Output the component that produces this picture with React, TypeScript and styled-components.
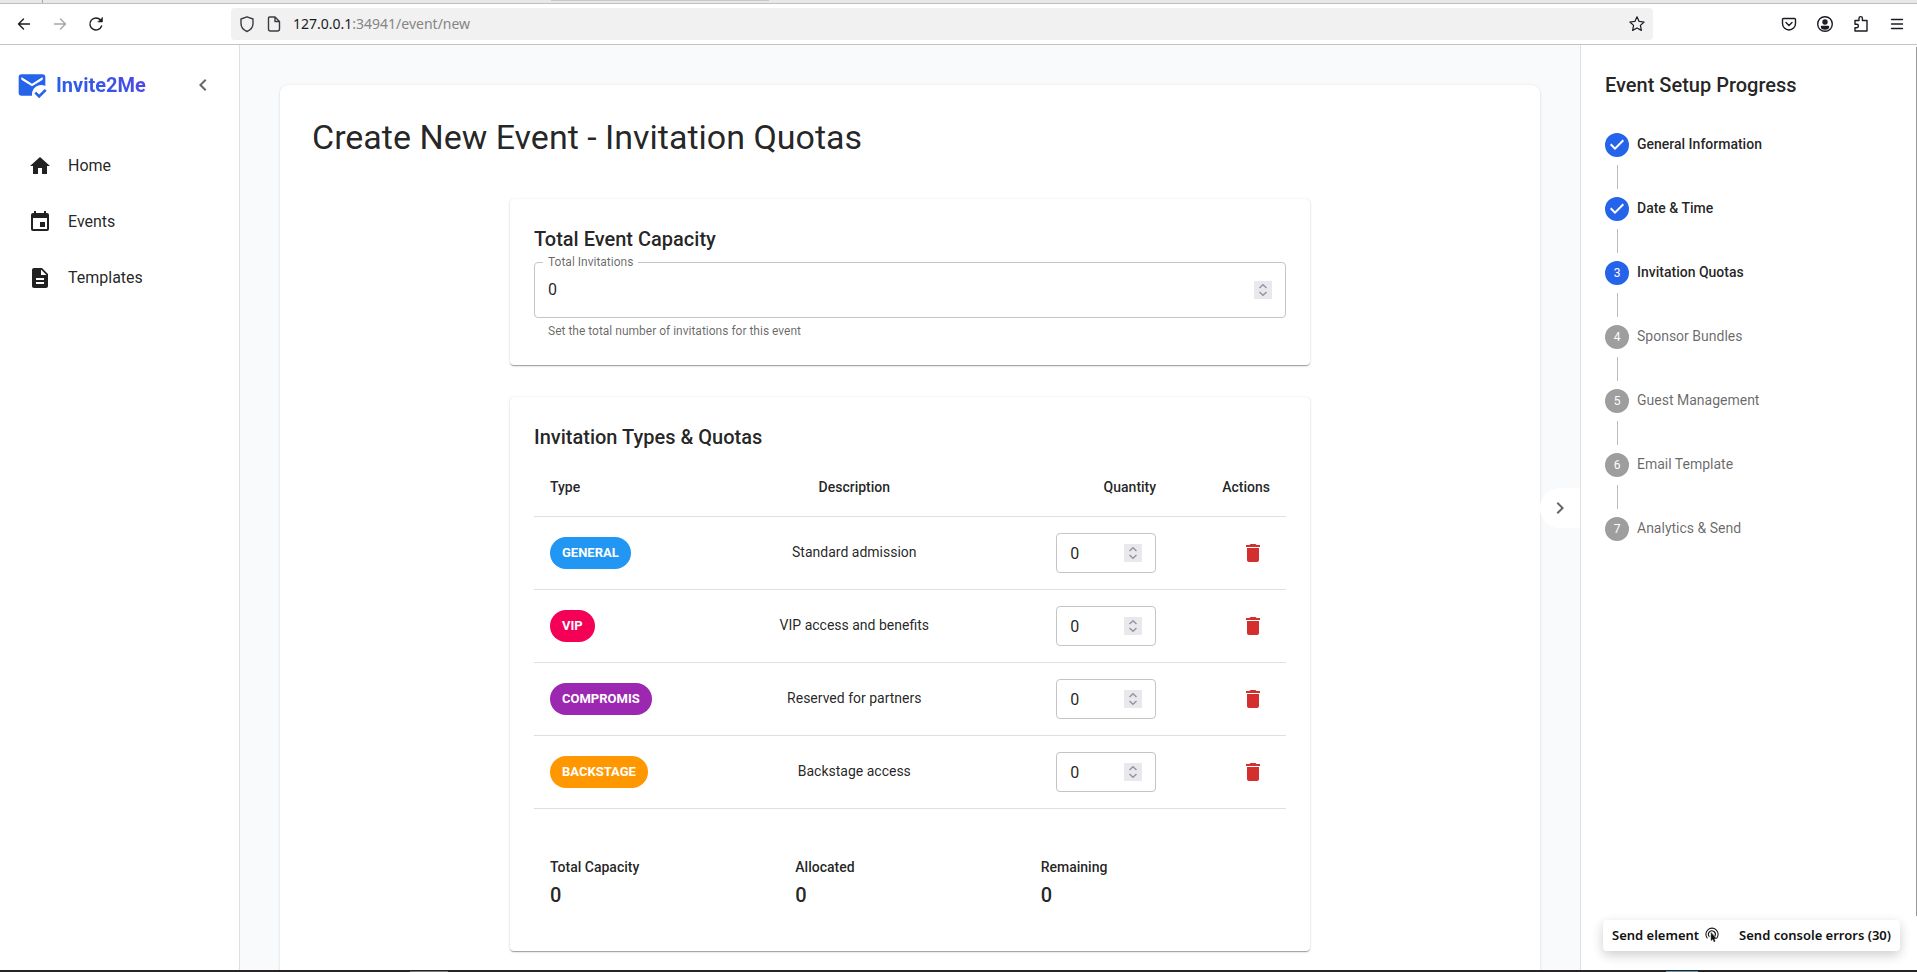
import React, { useState } from 'react';
import styled, { createGlobalStyle, css } from 'styled-components';

const INK = 'rgba(0, 0, 0, 0.87)';
const MUTED = 'rgba(0, 0, 0, 0.6)';
const BLUE = '#2563eb';

const GlobalStyle = createGlobalStyle`
  *, *::before, *::after { box-sizing: border-box; }
  body {
    margin: 0;
    color: ${INK};
    background: #fff;
    font-family: Roboto, "Liberation Sans", sans-serif;
    font-size: 16px;
    line-height: 24px;
    overflow: hidden;
  }
  button, input { font: inherit; color: inherit; }
  button { border: 0; padding: 0; background: none; cursor: pointer; }
`;

/* ---------- browser frame ---------- */

const Window = styled.div`
  display: flex;
  flex-direction: column;
  height: 100vh;
`;

const TabStrip = styled.div`
  display: flex;
  flex: none;
  height: 4px;
  background: #e8e8e8;
  border-bottom: 1px solid #c0c0c0;
`;

const TabDivider = styled.span`
  width: 1px;
  margin-left: 42px;
  background: #a8a8a8;
`;

const ActiveTab = styled.span`
  width: 218px;
  height: 1px;
  margin-left: 508px;
  background: #c8c8c8;
`;

const Toolbar = styled.div`
  display: flex;
  align-items: center;
  flex: none;
  height: 41px;
  padding: 0 12px 0 16px;
  background: #fff;
  border-bottom: 1px solid #c4c4c4;
`;

const NavButtons = styled.div`
  display: flex;
  gap: 20px;
  width: 215px;
`;

const ToolButton = styled.button`
  display: flex;
  width: 16px;
  height: 16px;
  color: #1c1b22;

  &:disabled { color: #a6a6a8; }
`;

const AddressBar = styled.div`
  display: flex;
  flex: 1;
  align-items: center;
  height: 32px;
  padding: 0 8px;
  gap: 11px;
  background: #f1f1f1;
  border-radius: 4px;
  color: #3c3b42;
`;

const Address = styled.span`
  flex: 1;
  color: #858585;
  font-family: "Noto Sans", sans-serif;
  font-size: 14px;
  line-height: 20px;

  b { color: #1c1b22; font-weight: 400; }
`;

const ToolGroup = styled.div`
  display: flex;
  justify-content: flex-end;
  gap: 20px;
  width: 252px;
`;

const Shelf = styled.div`
  display: flex;
  align-items: flex-end;
  flex: none;
  height: 2px;
  background: #262425;
`;

const ShelfMark = styled.span<{ $left: string; $width: number; $color: string }>`
  flex: none;
  width: ${(p) => p.$width}px;
  height: 1px;
  margin-left: ${(p) => p.$left};
  background: ${(p) => p.$color};
`;

/* ---------- application layout ---------- */

const Layout = styled.div`
  position: relative;
  display: flex;
  flex: 1;
  min-height: 0;
  background: #f8fafc;
`;

const Sidebar = styled.aside`
  flex: none;
  width: 240px;
  background: #fff;
  border-right: 1px solid #e0e0e0;
`;

const Brand = styled.div`
  display: flex;
  align-items: center;
  height: 80px;
  padding: 0 24px 0 16px;
`;

const BrandName = styled.span`
  flex: 1;
  margin-left: 8px;
  font-size: 20px;
  font-weight: 700;
  line-height: 32px;

  span {
    background: linear-gradient(45deg, ${BLUE} 0%, #4f46e5 100%);
    background-clip: text;
    color: transparent;
  }
`;

const IconButton = styled.button<{ $size: number; $color?: string }>`
  display: inline-flex;
  align-items: center;
  justify-content: center;
  width: ${(p) => p.$size}px;
  height: ${(p) => p.$size}px;
  border-radius: 50%;
  color: ${(p) => p.$color ?? '#666'};
  vertical-align: middle;
`;

const Menu = styled.nav`
  display: flex;
  flex-direction: column;
  gap: 8px;
  padding: 17px 8px;
`;

const MenuLink = styled.a`
  display: flex;
  align-items: center;
  gap: 16px;
  height: 48px;
  padding: 0 20px;
  border-radius: 8px;
  color: ${INK};
  text-decoration: none;
`;

const Main = styled.main`
  flex: 1;
  min-width: 0;
  padding: 40px 40px 0;
  overflow: hidden;
`;

const Sheet = styled.section`
  min-height: 1100px;
  padding: 32px;
  background: #fff;
  border-radius: 8px;
  box-shadow:
    0 0 2px rgba(0, 0, 0, 0.08),
    0 1px 3px rgba(0, 0, 0, 0.1);
`;

const PageTitle = styled.h1`
  margin: 0 0 42px;
  font-size: 34px;
  font-weight: 400;
  line-height: 40px;
`;

const Cards = styled.div`
  display: flex;
  flex-direction: column;
  gap: 32px;
  max-width: 800px;
  margin: 0 auto;
`;

const Card = styled.section`
  padding: 24px;
  background: #fff;
  border-radius: 4px;
  box-shadow:
    0 0 1px 0 rgba(0, 0, 0, 0.12),
    0 2px 1px -1px rgba(0, 0, 0, 0.2),
    0 1px 1px 0 rgba(0, 0, 0, 0.14),
    0 1px 3px 0 rgba(0, 0, 0, 0.12);
`;

const CardTitle = styled.h2`
  margin: 0 0 7px;
  font-size: 20px;
  font-weight: 500;
  line-height: 32px;
`;

/* ---------- number field ---------- */

const FieldFrame = styled.div<{ $compact?: boolean }>`
  position: relative;
  display: flex;
  align-items: center;
  height: 56px;
  padding: 0 13px;
  border: 1px solid #c4c4c4;
  border-radius: 4px;
  font-size: 16px;

  ${(p) =>
    p.$compact &&
    css`
      display: inline-flex;
      width: 100px;
      height: 40px;
      vertical-align: middle;
    `}
`;

const FieldLabel = styled.label`
  position: absolute;
  top: -12px;
  left: 8px;
  padding: 0 5px;
  background: #fff;
  color: ${MUTED};
  font-size: 12px;
  line-height: 22px;
`;

const NumberInput = styled.input`
  flex: 1;
  min-width: 0;
  height: 24px;
  padding: 0;
  border: 0;
  outline: 0;
  background: none;
  appearance: textfield;

  &::-webkit-inner-spin-button { display: none; }
`;

const Spinner = styled.span`
  display: flex;
  flex: none;
  width: 18px;
  height: 18px;
  background: #e9e9ed;
`;

const Helper = styled.p`
  margin: 3px 14px 0;
  color: ${MUTED};
  font-size: 12px;
  line-height: 20px;
`;

/* ---------- quota table ---------- */

const Table = styled.table`
  width: 100%;
  border-collapse: collapse;
  font-size: 14px;
`;

const Cell = styled.td<{ $align?: string }>`
  height: 73px;
  padding: 0 16px;
  border-bottom: 1px solid #e0e0e0;
  text-align: ${(p) => p.$align ?? 'left'};
  line-height: 20px;
`;

const TextCell = styled(Cell)`
  padding-bottom: 2px;
`;

const HeadCell = styled.th<{ $align?: string }>`
  padding: 15px 16px 17px;
  border-bottom: 1px solid #e0e0e0;
  font-weight: 500;
  line-height: 24px;
  text-align: ${(p) => p.$align ?? 'left'};
`;

const Chip = styled.span<{ $color: string }>`
  display: inline-block;
  padding: 0 12px;
  border-radius: 16px;
  background: ${(p) => p.$color};
  color: #fff;
  font-size: 13px;
  font-weight: 700;
  line-height: 32px;
  vertical-align: middle;
`;

const Totals = styled.dl`
  display: grid;
  grid-template-columns: repeat(3, 1fr);
  margin: 31px 0 0;
  padding: 16px 0 16px 16px;
`;

const TotalName = styled.dt`
  font-size: 14px;
  font-weight: 500;
  line-height: 22px;
`;

const TotalValue = styled.dd`
  margin: 0;
  padding-top: 1px;
  font-size: 20px;
  font-weight: 500;
  line-height: 32px;
`;

/* ---------- progress panel ---------- */

const Panel = styled.aside`
  flex: none;
  width: 337px;
  padding: 24px;
  background: #fff;
  border-left: 1px solid #e0e0e0;
`;

const PanelTitle = styled.h2`
  margin: 0 0 32px;
  font-size: 20px;
  font-weight: 500;
  line-height: 32px;
`;

const Steps = styled.ol`
  margin: 0;
  padding: 0;
  list-style: none;
`;

const Step = styled.li<{ $active: boolean }>`
  display: flex;
  flex-wrap: wrap;
  gap: 8px;
  color: ${(p) => (p.$active ? INK : MUTED)};
  font-size: 14px;
  font-weight: ${(p) => (p.$active ? 500 : 400)};
  line-height: 22px;

  &:not(:last-child)::after {
    content: '';
    flex: none;
    width: 1px;
    height: 24px;
    margin: 0 100% 8px 12px;
    background: #bdbdbd;
  }
`;

const Marker = styled.span<{ $active: boolean }>`
  display: flex;
  align-items: center;
  justify-content: center;
  width: 24px;
  height: 24px;
  border-radius: 50%;
  background: ${(p) => (p.$active ? BLUE : '#9e9e9e')};
  color: #fff;
  font-size: 12px;
  font-weight: 400;
`;

const PanelToggle = styled.button`
  position: absolute;
  top: calc(50% - 20px);
  right: 337px;
  display: flex;
  align-items: center;
  justify-content: center;
  width: 40px;
  height: 40px;
  background: #fff;
  border-radius: 20px 0 0 20px;
  color: #666;
`;

const ScrollThumb = styled.span`
  position: absolute;
  top: 2px;
  right: 0;
  bottom: 54px;
  width: 1px;
  background: #999;
`;

const DevTools = styled.div`
  position: absolute;
  right: 17px;
  bottom: 19px;
  display: flex;
  align-items: center;
  gap: 20px;
  height: 31px;
  padding: 0 9px 2px;
  background: #fff;
  border-radius: 4px;
  box-shadow: 0 4px 12px rgba(0, 0, 0, 0.2);
`;

const DevButton = styled.button`
  display: flex;
  align-items: center;
  gap: 6px;
  color: #111;
  font-family: "Noto Sans", sans-serif;
  font-size: 13px;
  font-weight: 600;
  line-height: 20px;
  white-space: nowrap;
`;

/* ---------- drawings ---------- */

const Glyph = ({ d, size = 24 }: { d: string; size?: number }) => (
  <svg width={size} height={size} viewBox="0 0 24 24" fill="currentColor" aria-hidden="true">
    <path d={d} />
  </svg>
);

const Line = ({ children, size = 16 }: { children: React.ReactNode; size?: number }) => (
  <svg
    width={size}
    height={size}
    viewBox="0 0 16 16"
    fill="none"
    stroke="currentColor"
    strokeWidth="1.4"
    strokeLinecap="round"
    strokeLinejoin="round"
    overflow="visible"
    aria-hidden="true"
  >
    {children}
  </svg>
);

const HOME = 'M10 20v-6h4v6h5v-8h3L12 3 2 12h3v8z';
const EVENT =
  'M17 12h-5v5h5v-5zM16 1v2H8V1H6v2H5c-1.11 0-1.99.9-1.99 2L3 19c0 1.1.89 2 2 2h14c1.1 0 2-.9 2-2V5c0-1.1-.9-2-2-2h-1V1h-2zm3 18H5V8h14v11z';
const DOC =
  'M14 2H6c-1.1 0-1.99.9-1.99 2L4 20c0 1.1.89 2 1.99 2H18c1.1 0 2-.9 2-2V8l-6-6zm2 16H8v-2h8v2zm0-4H8v-2h8v2zm-3-5V3.5L18.5 9H13z';
const TRASH = 'M6 19c0 1.1.9 2 2 2h8c1.1 0 2-.9 2-2V7H6v12zM19 4h-3.5l-1-1h-5l-1 1H5v2h14V4z';
const LEFT = 'M15.41 7.41 14 6l-6 6 6 6 1.41-1.41L10.83 12z';
const RIGHT = 'M10 6 8.59 7.41 13.17 12l-4.58 4.59L10 18l6-6z';
const CHECK = 'M10 17l-5-5 1.4-1.4 3.6 3.6 7.6-7.6L19 8l-9 9z';
const LOGO =
  'M20 4H4c-1.1 0-2 .9-2 2v12c0 1.1.9 2 2 2h8.08c-.05-.33-.08-.66-.08-1 0-3.87 3.13-7 7-7 1.07 0 2.09.24 3 .68V6c0-1.1-.9-2-2-2zm0 4-8 5-8-5V6l8 5 8-5v2zm-2.66 14-3.54-3.54 1.41-1.41 2.12 2.12 4.24-4.24L23 16.34 17.34 22z';

/* ---------- content ---------- */

const types = [
  { name: 'GENERAL', color: '#2196f3', text: 'Standard admission' },
  { name: 'VIP', color: '#f50057', text: 'VIP access and benefits' },
  { name: 'COMPROMIS', color: '#9c27b0', text: 'Reserved for partners' },
  { name: 'BACKSTAGE', color: '#ff9800', text: 'Backstage access' },
];

const steps = [
  'General Information',
  'Date & Time',
  'Invitation Quotas',
  'Sponsor Bundles',
  'Guest Management',
  'Email Template',
  'Analytics & Send',
];

const CURRENT_STEP = 2;

type NumberFieldProps = {
  id: string;
  label: string;
  value: number;
  compact?: boolean;
  onChange: (value: number) => void;
};

function NumberField({ id, label, value, compact, onChange }: NumberFieldProps) {
  return (
    <FieldFrame $compact={compact}>
      {!compact && <FieldLabel htmlFor={id}>{label}</FieldLabel>}
      <NumberInput
        id={id}
        type="number"
        min={0}
        aria-label={compact ? label : undefined}
        value={value}
        onChange={(e) => onChange(Number(e.target.value))}
      />
      <Spinner>
        <svg width="18" height="18" fill="none" stroke="#9595a3" strokeWidth="1.5" aria-hidden="true">
          <path d="M5.5 7 9 3.7 12.5 7M5.5 11 9 14.3 12.5 11" />
        </svg>
      </Spinner>
    </FieldFrame>
  );
}

export default function App() {
  const [capacity, setCapacity] = useState(0);
  const [quotas, setQuotas] = useState<number[]>(types.map(() => 0));
  const allocated = quotas.reduce((a, b) => a + b, 0);

  const totals: [string, number][] = [
    ['Total Capacity', capacity],
    ['Allocated', allocated],
    ['Remaining', capacity - allocated],
  ];

  return (
    <Window>
      <GlobalStyle />
      <TabStrip>
        <TabDivider />
        <ActiveTab />
      </TabStrip>
      <Toolbar>
        <NavButtons>
          <ToolButton aria-label="Back">
            <Line><path d="M13.500 8H2.500M7.500 3 2.500 8l5 5" /></Line>
          </ToolButton>
          <ToolButton aria-label="Forward" disabled>
            <Line><path d="M2.500 8h11M8.500 3l5 5-5 5" /></Line>
          </ToolButton>
          <ToolButton aria-label="Reload">
            <Line>
              <path d="M13.6 10A6 6 0 1 1 12.5 4" />
              <path d="M14.5 1.5V6H10z" fill="currentColor" strokeWidth="0.5" />
            </Line>
          </ToolButton>
        </NavButtons>
        <AddressBar>
          <Line><path d="M8 .8 14 3v4.500c0 3.500-2.500 6.500-6 8-3.500-1.500-6-4.500-6-8V3z" /></Line>
          <Line>
            <path d="M3.500 1H9l4.500 4.500V13a2 2 0 0 1-2 2h-7a2 2 0 0 1-2-2V2a1 1 0 0 1 1-1zM9 1v4.500h4.500" />
          </Line>
          <Address><b>127.0.0.1</b>:34941/event/new</Address>
          <ToolButton aria-label="Bookmark this page">
            <Line>
              <path d="m8 .8 2.100 4.600 5 .600-3.700 3.400 1 5L8 12l-4.400 2.400 1-5L.900 6l5-.600z" strokeWidth="1.2" />
            </Line>
          </ToolButton>
        </AddressBar>
        <ToolGroup>
          <ToolButton aria-label="Save to Pocket">
            <Line>
              <path d="M2.500 2.500h11a1 1 0 0 1 1 1V7.500a6.500 6.500 0 0 1-13 0v-4a1 1 0 0 1 1-1z" />
              <path d="M5 6.500 8 9.400l3-2.900" />
            </Line>
          </ToolButton>
          <ToolButton aria-label="Account">
            <Line>
              <circle cx="8" cy="8" r="7.300" />
              <circle cx="8" cy="6" r="2" fill="currentColor" />
              <path d="M4.500 10.500h7c0 1.500-1.500 2.500-3.500 2.500s-3.500-1-3.500-2.500z" fill="currentColor" />
            </Line>
          </ToolButton>
          <ToolButton aria-label="Extensions">
            <Line>
              <path d="M2 6V4.500h4V2.300a1.700 1.700 0 0 1 3.400 0V4.500H14V15H2v-3.300h1.700a1.700 1.700 0 0 0 0-3.400H2z" />
            </Line>
          </ToolButton>
          <ToolButton aria-label="Menu">
            <Line><path d="M2.500 3.500h11M2.500 8h11M2.500 12.500h11" /></Line>
          </ToolButton>
        </ToolGroup>
      </Toolbar>

      <Layout>
        <Sidebar>
          <Brand>
            <svg width="32" height="32" viewBox="0 0 24 24" fill={BLUE} aria-hidden="true">
              <path d={LOGO} />
            </svg>
            <BrandName><span>Invite2Me</span></BrandName>
            <IconButton $size={24} aria-label="Collapse menu">
              <Glyph d={LEFT} />
            </IconButton>
          </Brand>
          <Menu>
            <MenuLink href="#home"><Glyph d={HOME} />Home</MenuLink>
            <MenuLink href="#events"><Glyph d={EVENT} />Events</MenuLink>
            <MenuLink href="#templates"><Glyph d={DOC} />Templates</MenuLink>
          </Menu>
        </Sidebar>

        <Main>
          <Sheet>
            <PageTitle>Create New Event - Invitation Quotas</PageTitle>
            <Cards>
              <Card>
                <CardTitle>Total Event Capacity</CardTitle>
                <NumberField id="capacity" label="Total Invitations" value={capacity} onChange={setCapacity} />
                <Helper>Set the total number of invitations for this event</Helper>
              </Card>
              <Card>
                <CardTitle>Invitation Types &amp; Quotas</CardTitle>
                <Table>
                  <thead>
                    <tr>
                      <HeadCell>Type</HeadCell>
                      <HeadCell $align="center">Description</HeadCell>
                      <HeadCell $align="right">Quantity</HeadCell>
                      <HeadCell $align="right">Actions</HeadCell>
                    </tr>
                  </thead>
                  <tbody>
                    {types.map((type, i) => (
                      <tr key={type.name}>
                        <Cell><Chip $color={type.color}>{type.name}</Chip></Cell>
                        <TextCell $align="center">{type.text}</TextCell>
                        <Cell $align="right">
                          <NumberField
                            compact
                            id={`quota-${i}`}
                            label={`${type.name} quantity`}
                            value={quotas[i]}
                            onChange={(v) => setQuotas(quotas.map((q, j) => (j === i ? v : q)))}
                          />
                        </Cell>
                        <Cell $align="right">
                          <IconButton $size={34} $color="#d32f2f" aria-label={`Delete ${type.name}`}>
                            <Glyph d={TRASH} />
                          </IconButton>
                        </Cell>
                      </tr>
                    ))}
                  </tbody>
                </Table>
                <Totals>
                  {totals.map(([name, value]) => (
                    <div key={name}>
                      <TotalName>{name}</TotalName>
                      <TotalValue>{value}</TotalValue>
                    </div>
                  ))}
                </Totals>
              </Card>
            </Cards>
          </Sheet>
        </Main>

        <Panel>
          <PanelTitle>Event Setup Progress</PanelTitle>
          <Steps>
            {steps.map((name, i) => (
              <Step key={name} $active={i <= CURRENT_STEP}>
                <Marker $active={i <= CURRENT_STEP}>
                  {i < CURRENT_STEP ? <Glyph d={CHECK} /> : i + 1}
                </Marker>
                {name}
              </Step>
            ))}
          </Steps>
        </Panel>

        <PanelToggle aria-label="Hide progress">
          <Glyph d={RIGHT} />
        </PanelToggle>
        <ScrollThumb />
        <DevTools>
          <DevButton>
            Send element
            <Line size={14}>
              <path d="M2.500 11.500a7 7 0 1 1 11 0M4.700 9.700a4 4 0 1 1 6.800-.700" strokeWidth="1.2" />
              <path d="M7 5.500v8.800l2-1.600 1.300 3 1.300-.600-1.300-2.900 2.500-.200z" fill="currentColor" strokeWidth="0.5" />
            </Line>
          </DevButton>
          <DevButton>Send console errors (30)</DevButton>
        </DevTools>
      </Layout>

      <Shelf>
        <ShelfMark $left="21.4%" $width={38} $color="#777" />
        <ShelfMark $left="63.5%" $width={32} $color="#5b9bb5" />
      </Shelf>
    </Window>
  );
}
